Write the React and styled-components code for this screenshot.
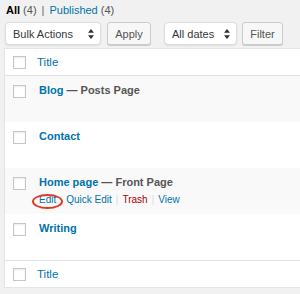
import styled, { createGlobalStyle } from "styled-components";

const GlobalStyle = createGlobalStyle`
  html, body {
    margin: 0;
    padding: 0;
    background: #f1f1f1;
    overflow: hidden;
  }
  body {
    font-family: "Liberation Sans", Arial, sans-serif;
    font-size: 11px;
    color: #444;
  }
`;

const Page = styled.div`
  width: 300px;
  padding: 0 0 0 4px;
  box-sizing: border-box;
`;

const Status = styled.div`
  padding: 3px 0 0 2px;
  line-height: 14px;
  color: #555;
`;

const Current = styled.span`
  color: #000;
  font-weight: bold;
`;

const Link = styled.span`
  color: #0073aa;
`;

const Divider = styled.span`
  color: #666;
  margin: 0 5px;
`;

const TableNav = styled.div`
  display: flex;
  align-items: center;
  margin-top: 5px;
  padding-left: 1px;
  height: 23px;
`;

const Select = styled.div`
  width: ${(p) => p.$w}px;
  height: 23px;
  margin-left: ${(p) => p.$ml || 0}px;
  box-sizing: border-box;
  display: flex;
  align-items: center;
  justify-content: space-between;
  padding: 0 6px 0 7px;
  background: #fff;
  border: 1px solid #dcdcdc;
  border-radius: 4px;
  box-shadow: 0 1px 2px rgba(0, 0, 0, 0.08);
  color: #32373c;
`;

const Button = styled.div`
  width: ${(p) => p.$w}px;
  height: 23px;
  margin-left: ${(p) => p.$ml || 0}px;
  box-sizing: border-box;
  display: flex;
  align-items: center;
  justify-content: center;
  background: #f7f7f7;
  border: 1px solid #ccc;
  border-radius: 3px;
  box-shadow: 0 1px 0 #ccc;
  color: #555;
`;

const Table = styled.div`
  margin-top: 3px;
  width: calc(100% + 20px);
  background: #fff;
  border: 1px solid #e5e5e5;
  box-shadow: 0 1px 1px rgba(0, 0, 0, 0.04);
`;

const HeadRow = styled.div`
  display: flex;
  align-items: center;
  height: 26px;
  border-top: ${(p) => (p.$foot ? "1px solid #e1e1e1" : "0")};
  border-bottom: ${(p) => (p.$foot ? "0" : "1px solid #e1e1e1")};
`;

const Row = styled.div`
  display: flex;
  align-items: flex-start;
  height: 46px;
  box-sizing: border-box;
  padding-top: 7px;
  background: ${(p) => (p.$alt ? "#f9f9f9" : "#fff")};
`;

const CheckCell = styled.div`
  width: 29px;
  padding-left: 8px;
  box-sizing: border-box;
  flex: none;
  display: flex;
  padding-top: ${(p) => (p.$row ? 2 : 0)}px;
`;

const Check = styled.span`
  width: 13px;
  height: 13px;
  box-sizing: border-box;
  background: #fff;
  border: 1px solid #c4c7ca;
  box-shadow: inset 0 1px 2px rgba(0, 0, 0, 0.08);
`;

const HeadTitle = styled.div`
  padding-left: 3px;
  color: #0073aa;
  font-size: 11.5px;
  line-height: 14px;
`;

const TitleCell = styled.div`
  padding-left: 5px;
  display: flex;
  flex-direction: column;
`;

const PostTitle = styled.div`
  font-weight: bold;
  line-height: 14px;
  color: #555;
  white-space: nowrap;
`;

const Actions = styled.div`
  margin-top: 4px;
  display: flex;
  font-size: 10px;
  line-height: 14px;
  white-space: nowrap;
`;

const Action = styled.span`
  position: relative;
  color: ${(p) => (p.$danger ? "#a00" : "#0073aa")};
  margin-right: ${(p) => p.$mr || 0}px;
`;

/* annotation drawn over the Edit link */
const Circle = styled.span`
  position: absolute;
  left: -7px;
  top: 1px;
  width: 31px;
  height: 15px;
  box-sizing: border-box;
  border: 2px solid #dd3a2e;
  border-radius: 50%;
  pointer-events: none;
`;

const Sep = styled.span`
  color: #ddd;
  margin: 0 4px;
`;

const Arrows = () => (
  <svg width="6" height="10" viewBox="0 0 6 10">
    <path d="M3 0 L6 3.8 H0 Z M0 6.2 H6 L3 10 Z" fill="#333" />
  </svg>
);

const pages = [
  { title: "Blog", state: "Posts Page" },
  { title: "Contact" },
  { title: "Home page", state: "Front Page", actions: true },
  { title: "Writing" },
];

const App = () => (
  <Page>
    <GlobalStyle />
    <Status>
      <Current>All</Current> (4)
      <Divider>|</Divider>
      <Link>Published</Link> (4)
    </Status>
    <TableNav>
      <Select $w={96}>
        Bulk Actions
        <Arrows />
      </Select>
      <Button $w={44} $ml={6}>
        Apply
      </Button>
      <Select $w={73} $ml={13}>
        All dates
        <Arrows />
      </Select>
      <Button $w={41} $ml={5}>
        Filter
      </Button>
    </TableNav>
    <Table>
      <HeadRow>
        <CheckCell>
          <Check />
        </CheckCell>
        <HeadTitle>Title</HeadTitle>
      </HeadRow>
      {pages.map((p, i) => (
        <Row key={p.title} $alt={i % 2 === 0}>
          <CheckCell $row>
            <Check />
          </CheckCell>
          <TitleCell>
            <PostTitle>
              <Link>{p.title}</Link>
              {p.state ? ` — ${p.state}` : ""}
            </PostTitle>
            {p.actions && (
              <Actions>
                <Action $mr={10}>
                  Edit
                  <Circle />
                </Action>
                <Action>Quick Edit</Action>
                <Sep>|</Sep>
                <Action $danger>Trash</Action>
                <Sep>|</Sep>
                <Action>View</Action>
              </Actions>
            )}
          </TitleCell>
        </Row>
      ))}
      <HeadRow $foot>
        <CheckCell>
          <Check />
        </CheckCell>
        <HeadTitle>Title</HeadTitle>
      </HeadRow>
    </Table>
  </Page>
);

export default App;
